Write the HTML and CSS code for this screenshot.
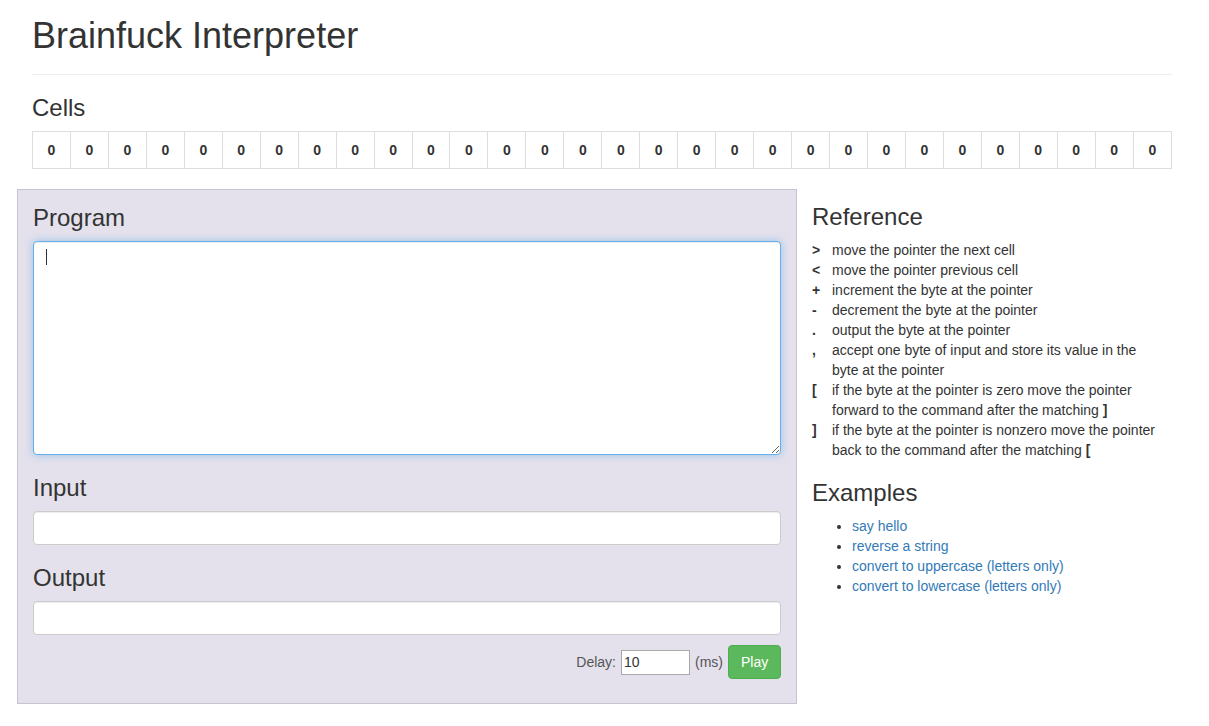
FILE: index.html
```html
<!DOCTYPE html>
<html>
<head>
<meta charset="utf-8">
<title>Brainfuck Interpreter</title>
<link rel="stylesheet" href="styles.css">
</head>
<body>
<div class="page">
  <div class="page-header">
    <h1>Brainfuck Interpreter</h1>
  </div>
  <h3 class="cells-title">Cells</h3>
  <table class="cells">
    <tr>
      <td>0</td><td>0</td><td>0</td><td>0</td><td>0</td><td>0</td><td>0</td><td>0</td><td>0</td><td>0</td>
      <td>0</td><td>0</td><td>0</td><td>0</td><td>0</td><td>0</td><td>0</td><td>0</td><td>0</td><td>0</td>
      <td>0</td><td>0</td><td>0</td><td>0</td><td>0</td><td>0</td><td>0</td><td>0</td><td>0</td><td>0</td>
    </tr>
  </table>
  <div class="row">
    <div class="panel">
      <h3>Program</h3>
      <div class="program-wrap">
        <textarea class="program"></textarea>
        <span class="caret"></span>
      </div>
      <h3 class="spaced">Input</h3>
      <input class="field" type="text">
      <h3 class="spaced">Output</h3>
      <input class="field" type="text">
      <div class="controls">
        <span class="label">Delay:</span>
        <input class="delay" type="text" value="10">
        <span class="label">(ms)</span>
        <button class="play">Play</button>
      </div>
    </div>
    <div class="side">
      <h3>Reference</h3>
      <dl class="ref">
        <dt>&gt;</dt><dd>move the pointer the next cell</dd>
        <dt>&lt;</dt><dd>move the pointer previous cell</dd>
        <dt>+</dt><dd>increment the byte at the pointer</dd>
        <dt>-</dt><dd>decrement the byte at the pointer</dd>
        <dt>.</dt><dd>output the byte at the pointer</dd>
        <dt>,</dt><dd>accept one byte of input and store its value in the byte at the pointer</dd>
        <dt>[</dt><dd>if the byte at the pointer is zero move the pointer forward to the command after the matching <b>]</b></dd>
        <dt>]</dt><dd>if the byte at the pointer is nonzero move the pointer back to the command after the matching <b>[</b></dd>
      </dl>
      <h3 class="spaced">Examples</h3>
      <ul class="examples">
        <li><a href="#">say hello</a></li>
        <li><a href="#">reverse a string</a></li>
        <li><a href="#">convert to uppercase (letters only)</a></li>
        <li><a href="#">convert to lowercase (letters only)</a></li>
      </ul>
    </div>
  </div>
</div>
</body>
</html>
```
FILE: styles.css
```css
* { box-sizing: border-box; }
html, body { margin: 0; padding: 0; background: #fff; }
body {
  font-family: "Liberation Sans", Arial, Helvetica, sans-serif;
  font-size: 14px;
  line-height: 20px;
  color: #333;
}
.page {
  width: 1140px;
  margin-left: 32px;
}
.page-header {
  padding-bottom: 18px;
  border-bottom: 1px solid #eee;
}
h1 {
  margin: 16px 0 0 0;
  font-size: 36px;
  line-height: 40px;
  font-weight: 500;
}
h3 {
  margin: 0 0 10px 0;
  font-size: 24px;
  line-height: 26px;
  font-weight: 500;
}
h3.spaced { margin-top: 20px; }
.cells-title { margin-top: 20px; }
.cells {
  width: 1140px;
  table-layout: fixed;
  border-collapse: collapse;
  margin-bottom: 20px;
}
.cells td {
  border: 1px solid #ddd;
  padding: 8px 0;
  line-height: 20px;
  text-align: center;
  font-weight: bold;
  font-size: 14px;
}
.row {
  display: flex;
  margin: 0 -15px;
}
.panel {
  width: 780px;
  flex: none;
  background: #e4e1ec;
  border: 1px solid #c7c3d3;
  padding: 15px 15px 24px 15px;
}
.side {
  width: 390px;
  flex: none;
  padding: 15px 25px 0 15px;
}
.program-wrap { position: relative; }
.program {
  display: block;
  width: 100%;
  height: 214px;
  margin: 0;
  padding: 6px 12px;
  border: 1px solid #66afe9;
  border-radius: 4px;
  outline: none;
  background: #fff;
  font-family: inherit;
  font-size: 14px;
  box-shadow: inset 0 1px 1px rgba(0,0,0,.075), 0 0 8px rgba(102,175,233,.6);
}
.caret {
  position: absolute;
  left: 13px;
  top: 8px;
  width: 1px;
  height: 16px;
  background: #333;
}
.field {
  display: block;
  width: 100%;
  height: 34px;
  margin: 0;
  padding: 6px 12px;
  border: 1px solid #ccc;
  border-radius: 4px;
  background: #fff;
  font-family: inherit;
  font-size: 14px;
  box-shadow: inset 0 1px 1px rgba(0,0,0,.075);
}
.controls {
  margin-top: 10px;
  display: flex;
  justify-content: flex-end;
  align-items: center;
  gap: 4px;
}
.label { color: #555; }
.delay {
  width: 69px;
  height: 25px;
  margin: 0 1px;
  padding: 1px 2px;
  border: 1px solid #a9a9a9;
  background: #fff;
  font-family: inherit;
  font-size: 14px;
  color: #333;
}
.play {
  margin-left: 1px;
  height: 34px;
  width: 53px;
  padding: 6px 12px;
  border: 1px solid #4cae4c;
  border-radius: 4px;
  background: #5cb85c;
  color: #fff;
  font-family: inherit;
  font-size: 14px;
  line-height: 20px;
}
.ref {
  margin: 0;
  display: grid;
  grid-template-columns: 20px 1fr;
}
.ref dt { font-weight: bold; }
.ref dd { margin: 0; }
.examples {
  margin: 0;
  padding-left: 40px;
}
.examples a {
  color: #337ab7;
  text-decoration: none;
}
```
